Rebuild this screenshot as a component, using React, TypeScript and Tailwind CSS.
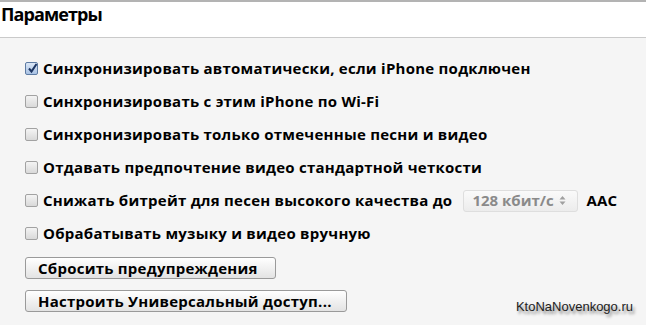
import React from "react";

const options = [
  { label: "Синхронизировать автоматически, если iPhone подключен", checked: true },
  { label: "Синхронизировать с этим iPhone по Wi-Fi", checked: false },
  { label: "Синхронизировать только отмеченные песни и видео", checked: false },
  { label: "Отдавать предпочтение видео стандартной четкости", checked: false },
];

function Checkbox({ checked }: { checked: boolean }) {
  return (
    <span
      className={
        checked
          ? "relative mr-[5px] flex h-[13px] w-[13px] shrink-0 items-center justify-center rounded-[2px] border border-[#5d7ba3] bg-gradient-to-b from-[#dbe7f6] to-[#a9c2e4]"
          : "relative mr-[5px] flex h-[13px] w-[13px] shrink-0 rounded-[2px] border border-[#a2a2a2] bg-gradient-to-b from-[#f4f4f4] to-[#d9d9d9]"
      }
    >
      {checked && (
        <svg width="11" height="11" viewBox="0 0 11 11" className="absolute left-[1px] top-[0px]">
          <path d="M2 5.5 L4.5 8.5 L9.5 1" fill="none" stroke="#1c3461" strokeWidth="2" />
        </svg>
      )}
    </span>
  );
}

function Row({ checked, children }: { checked: boolean; children: React.ReactNode }) {
  return (
    <div className="flex h-[33px] items-center">
      <Checkbox checked={checked} />
      {children}
    </div>
  );
}

function Button({ children, className }: { children: React.ReactNode; className?: string }) {
  return (
    <button
      className={
        "flex h-[22px] items-center rounded-[3px] border border-[#9a9a9a] bg-gradient-to-b from-[#ffffff] to-[#e3e3e3] pl-[12px] text-left text-[#000] " +
        (className ?? "")
      }
    >
      {children}
    </button>
  );
}

export default function App() {
  return (
    <div
      className="relative h-[325px] w-[646px] overflow-hidden bg-[#f5f5f5] text-[#000]"
      style={{ fontFamily: '"Open Sans", "Noto Sans", sans-serif' }}
    >
      <div className="h-[38px] border-t-2 border-b border-t-[#b3b3b3] border-b-[#cacaca] bg-white pl-[1px] pt-[3px]">
        <h1 className="text-[18px] font-bold leading-none tracking-[-0.9px]">Параметры</h1>
      </div>

      <div className="pl-[25px] pt-[14px] text-[15px] font-bold tracking-[0.25px]">
        {options.map((o) => (
          <Row key={o.label} checked={o.checked}>
            {o.label}
          </Row>
        ))}
        <Row checked={false}>
          <span>Снижать битрейт для песен высокого качества до</span>
          <div className="ml-[11px] flex h-[22px] w-[115px] items-center rounded-[3px] border border-[#dedede] bg-gradient-to-b from-[#fafafa] to-[#ececec] pl-[8px] text-[#8a8a8a] tracking-normal">
            <span>128 кбит/с</span>
            <svg width="7" height="11" viewBox="0 0 7 11" className="ml-[5px]">
              <path d="M0.5 4.5 L3.5 1 L6.5 4.5 Z M0.5 6.5 L3.5 10 L6.5 6.5 Z" fill="#a0a0a0" />
            </svg>
          </div>
          <span className="ml-[8px]">AAC</span>
        </Row>
        <Row checked={false}>Обрабатывать музыку и видео вручную</Row>

        <div className="mt-[7px] flex flex-col gap-[11px]">
          <Button className="w-[251px]">Сбросить предупреждения</Button>
          <Button className="w-[322px]">Настроить Универсальный доступ...</Button>
        </div>
      </div>

      <div
        className="absolute bottom-[9px] right-[13px] text-[13px] text-[#222]"
        style={{ fontFamily: '"Liberation Sans", Arial, sans-serif', textShadow: "2px 3px 3px rgba(0,0,0,0.45)" }}
      >
        KtoNaNovenkogo.ru
      </div>
    </div>
  );
}
